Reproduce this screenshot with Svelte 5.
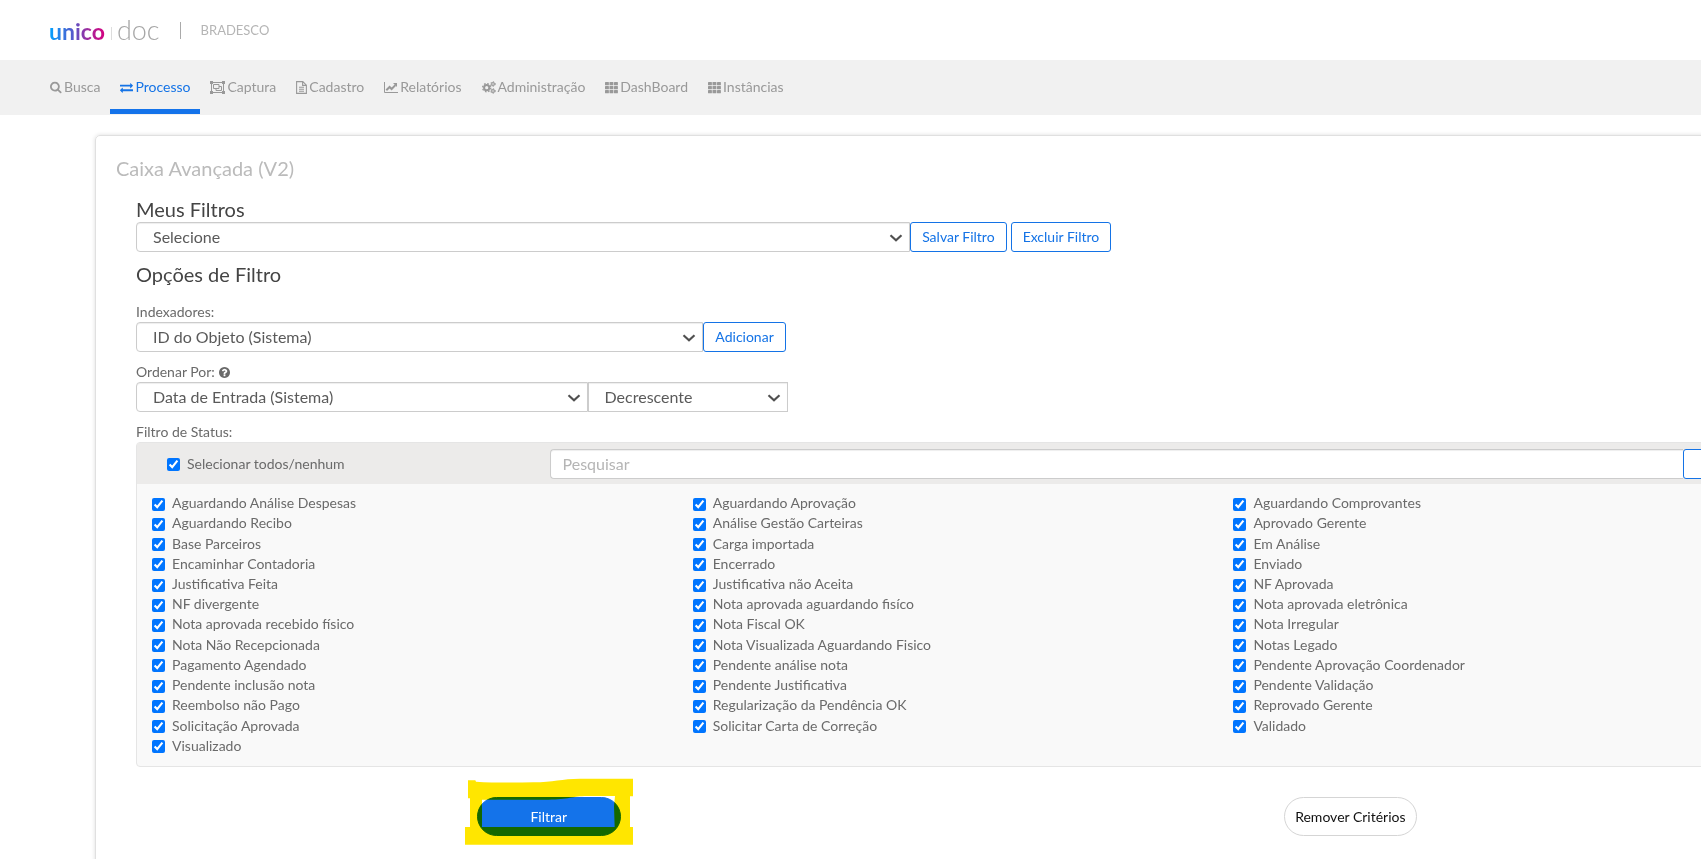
<script>
  const tabs = [
    { icon: 'search', label: 'Busca' },
    { icon: 'exchange', label: 'Processo', active: true },
    { icon: 'group', label: 'Captura' },
    { icon: 'file', label: 'Cadastro' },
    { icon: 'chart', label: 'Relatórios' },
    { icon: 'cogs', label: 'Administração' },
    { icon: 'grid', label: 'DashBoard' },
    { icon: 'grid', label: 'Instâncias' }
  ];

  const statuses = [
    'Aguardando Análise Despesas', 'Aguardando Aprovação', 'Aguardando Comprovantes',
    'Aguardando Recibo', 'Análise Gestão Carteiras', 'Aprovado Gerente',
    'Base Parceiros', 'Carga importada', 'Em Análise',
    'Encaminhar Contadoria', 'Encerrado', 'Enviado',
    'Justificativa Feita', 'Justificativa não Aceita', 'NF Aprovada',
    'NF divergente', 'Nota aprovada aguardando fisíco', 'Nota aprovada eletrônica',
    'Nota aprovada recebido físico', 'Nota Fiscal OK', 'Nota Irregular',
    'Nota Não Recepcionada', 'Nota Visualizada Aguardando Fisico', 'Notas Legado',
    'Pagamento Agendado', 'Pendente análise nota', 'Pendente Aprovação Coordenador',
    'Pendente inclusão nota', 'Pendente Justificativa', 'Pendente Validação',
    'Reembolso não Pago', 'Regularização da Pendência OK', 'Reprovado Gerente',
    'Solicitação Aprovada', 'Solicitar Carta de Correção', 'Validado',
    'Visualizado'
  ];

  let checked = $state(statuses.map(() => true));
  let all = $derived(checked.every(Boolean));

  function toggleAll(event) {
    const value = event.currentTarget.checked;
    checked = statuses.map(() => value);
  }
</script>

{#snippet icon(name)}
  {#if name === 'search'}
    <svg class="icon" width="12" height="13" viewBox="64 64 1728 1792"><path d="M1216 832q0-185-131.5-316.5T768 384 451.5 515.5 320 832t131.5 316.5T768 1280t316.5-131.5T1216 832zm512 832q0 52-38 90t-90 38q-54 0-90-38l-343-342q-179 124-399 124-143 0-273.5-55.5t-225-150-150-225T64 832t55.5-273.5 150-225 225-150T768 128t273.5 55.5 225 150 150 225T1472 832q0 220-124 399l343 343q37 37 37 90z" /></svg>
  {:else if name === 'exchange'}
    <svg class="icon" width="13" height="13" viewBox="0 0 1792 1792"><path d="M1792 1184v192q0 13-9.500 22.500t-22.500 9.500h-1376v192q0 13-9.500 22.500t-22.500 9.500q-12 0-24-10l-319-320q-9-9-9-22 0-14 9-23l320-320q9-9 23-9 13 0 22.500 9.500t9.500 22.500v192h1376q13 0 22.500 9.500t9.500 22.500zm0-544q0 14-9 23l-320 320q-9 9-23 9-13 0-22.500-9.500t-9.500-22.500v-192h-1376q-13 0-22.500-9.500t-9.500-22.500v-192q0-13 9.500-22.500t22.500-9.500h1376v-192q0-14 9-23t23-9q12 0 24 10l319 319q9 9 9 23z" /></svg>
  {:else if name === 'group'}
    <svg class="icon" width="15" height="13" viewBox="0 0 15 13">
      <path d="M0 0h3v1h9V0h3v3h-1v7h1v3h-3v-1H3v1H0v-3h1V3H0zM2 3v7h1v1h9v-1h1V3h-1V2H3v1z" fill-rule="evenodd" />
      <path d="M3.500 3.500h5.500v4H3.500z M9 5.500h2.500v4H6v-2" fill="none" stroke="currentColor" />
    </svg>
  {:else if name === 'file'}
    <svg class="icon" width="11" height="13" viewBox="0 0 11 13">
      <path d="M.6.6h6.200l3.600 3.600v8.200H.6zM6.600.6v3.800h3.800M3 6.300h5M3 8.300h5M3 10.300h5" fill="none" stroke="currentColor" stroke-width="1.100" />
    </svg>
  {:else if name === 'chart'}
    <svg class="icon" width="14" height="13" viewBox="0 0 14 13">
      <path d="M.5 1v10.500H14" fill="none" stroke="currentColor" />
      <path d="M2.300 9.300l3.300-3.300 2 2 3.800-3.900" fill="none" stroke="currentColor" stroke-width="2" />
      <path d="M9 2h4v4z" />
    </svg>
  {:else if name === 'cogs'}
    <svg class="icon" width="14" height="13" viewBox="0 0 14 13">
      <g fill="none" stroke="currentColor">
        <circle cx="4.700" cy="6.700" r="2.600" stroke-width="2" />
        <circle cx="4.700" cy="6.700" r="4.100" stroke-width="1.300" stroke-dasharray="1.620 1.600" />
        <circle cx="11" cy="3" r="1.400" stroke-width="1.200" />
        <circle cx="11" cy="3" r="2.300" stroke-width="1" stroke-dasharray="1.200 1.209" />
        <circle cx="11" cy="10" r="1.400" stroke-width="1.200" />
        <circle cx="11" cy="10" r="2.300" stroke-width="1" stroke-dasharray="1.200 1.209" />
      </g>
    </svg>
  {:else if name === 'grid'}
    <svg class="icon" width="13" height="13" viewBox="0 0 13 13">
      {#each [1, 5, 9] as y}
        {#each [0, 4.5, 9] as x}
          <rect {x} {y} width="3.900" height="3.300" rx=".6" />
        {/each}
      {/each}
    </svg>
  {:else if name === 'help'}
    <svg class="icon" width="11" height="11" viewBox="128 128 1536 1536"><path d="M1024 1376v-192q0-14-9-23t-23-9h-192q-14 0-23 9t-9 23v192q0 14 9 23t23 9h192q14 0 23-9t9-23zm256-672q0-88-55.500-163t-138.500-116-170-41q-243 0-371 213-15 24 8 42l132 100q7 6 19 6 16 0 25-12 53-68 86-92 34-24 86-24 48 0 85.500 26t37.500 59q0 38-20 61t-68 45q-63 28-115.500 86.500t-52.500 125.500v36q0 14 9 23t23 9h192q14 0 23-9t9-23q0-19 21.500-49.500t54.500-49.500q32-18 49-28.500t46-35 44.500-48 28-60.500 12.500-81zm384 192q0 209-103 385.500t-279.500 279.500-385.500 103-385.500-103-279.500-279.500-103-385.500 103-385.500 279.500-279.500 385.500-103 385.500 103 279.500 279.500 103 385.500z" /></svg>
  {/if}
{/snippet}

{#snippet chevron()}
  <svg class="chevron" width="14" height="8" viewBox="0 0 14 8"><path d="M1.500 1.300L7 6.200l5.500-4.900" fill="none" stroke="#505050" stroke-width="2.200" /></svg>
{/snippet}

<div class="page">
  <header>
    <a class="logo" href="#inicio"><span class="unico">unico</span><span class="thin"></span><span class="doc">doc</span></a>
    <span class="rule"></span>
    <span class="client">BRADESCO</span>
  </header>

  <nav>
    {#each tabs as tab}
      <a href="#{tab.label}" class:active={tab.active}>{@render icon(tab.icon)}<span>{tab.label}</span></a>
    {/each}
  </nav>

  <main>
    <section class="card">
      <h1>Caixa Avançada (V2)</h1>
      <form onsubmit={(e) => e.preventDefault()}>
        <h2><label for="saved">Meus Filtros</label></h2>
        <div class="line">
          <div class="select saved"><select id="saved"><option>Selecione</option></select>{@render chevron()}</div>
          <button class="outline">Salvar Filtro</button>
          <button class="outline spaced">Excluir Filtro</button>
        </div>

        <h2 class="options">Opções de Filtro</h2>

        <label class="caption" for="index">Indexadores:</label>
        <div class="line">
          <div class="select index"><select id="index"><option>ID do Objeto (Sistema)</option></select>{@render chevron()}</div>
          <button class="outline">Adicionar</button>
        </div>

        <label class="caption" for="order">Ordenar Por: {@render icon('help')}</label>
        <div class="line">
          <div class="select order"><select id="order"><option>Data de Entrada (Sistema)</option></select>{@render chevron()}</div>
          <div class="select direction"><select aria-label="Direção"><option>Decrescente</option><option>Crescente</option></select>{@render chevron()}</div>
        </div>

        <div class="caption">Filtro de Status:</div>
        <div class="panel">
          <div class="panel-head">
            <label class="check"><input type="checkbox" checked={all} onchange={toggleAll} /><span>Selecionar todos/nenhum</span></label>
            <div class="search">
              <input type="text" placeholder="Pesquisar" aria-label="Pesquisar" />
              <button class="outline" aria-label="Buscar">{@render icon('search')}</button>
            </div>
          </div>
          <div class="statuses">
            {#each statuses as status, i}
              <label class="check"><input type="checkbox" bind:checked={checked[i]} /><span>{status}</span></label>
            {/each}
          </div>
        </div>

        <div class="actions">
          <div class="marked">
            <button class="pill primary">Filtrar</button>
            <svg class="marker" width="168" height="67" viewBox="0 0 504 201" aria-hidden="true">
              <path fill-rule="evenodd" d="M9 7H31L33 11Q100 15 205 13C265 13 290 2 345 2H504V55H495V147H504V200H0V147H15V61H9ZM51 65H250C310 65 325 54 365 54H450L447 85L449 147H51Z" />
            </svg>
          </div>
          <div><button class="pill" type="reset">Remover Critérios</button></div>
        </div>
      </form>
    </section>
  </main>
</div>

<style>
  :global(body) {
    margin: 0;
    background: #fff;
  }

  .page {
    overflow: hidden;
    min-height: 100vh;
    font-family: Lato, "Open Sans", sans-serif;
    font-size: 14px;
    line-height: 20px;
    color: #6a6a6a;
  }

  *, *::before, *::after { box-sizing: border-box; }

  button, input, select { font: inherit; color: inherit; margin: 0; }

  a { text-decoration: none; color: inherit; }

  header {
    display: flex;
    align-items: center;
    height: 60px;
    padding-left: 49px;
  }

  .logo {
    display: flex;
    align-items: baseline;
    line-height: 32px;
  }

  .unico {
    font-size: 23px;
    font-weight: 700;
    color: transparent;
    background: linear-gradient(90deg, #00a3ff, #5a55c8 45%, #a02a9c 70%, #d6007f);
    background-clip: text;
  }

  .thin {
    width: 1px;
    height: 13px;
    margin: 0 5px 0 6px;
    background: #ddd;
  }

  .doc {
    font-size: 27px;
    font-weight: 300;
    color: #a6a6a6;
  }

  .rule {
    width: 1px;
    height: 17px;
    margin: 0 20px;
    background: #aaa;
  }

  .client {
    font-size: 13px;
    color: #b5b5b5;
  }

  nav {
    display: flex;
    height: 55px;
    padding-left: 40px;
    background: #f1f1f1;
    color: #999;
  }

  nav a {
    display: flex;
    align-items: center;
    gap: 2px;
    height: 54px;
    padding: 0 10px;
    border-top: 5px solid transparent;
    border-bottom: 5px solid transparent;
    white-space: nowrap;
  }

  nav a.active {
    color: #1473e6;
    border-bottom-color: #1473ea;
  }

  .icon { flex: none; fill: currentColor; }

  main {
    width: 113%;
    padding: 20px 91px 0 95px;
  }

  .card {
    padding: 20px 40px 60px 20px;
    border: 1px solid #e0e0e0;
    border-radius: 5px;
    box-shadow: 0 0 4px #ddd;
  }

  h1, h2 {
    margin: 0;
    font-size: 20px;
    font-weight: 400;
    line-height: 24px;
  }

  h1 { color: #bbb; }

  h2 {
    padding-bottom: 1px;
    color: #444;
  }

  form { padding: 17px 0 0 20px; }

  .line { display: flex; }

  .options { margin: 10px 0 15px; }

  .caption {
    display: flex;
    align-items: center;
    gap: 4px;
    height: 20px;
  }

  .line + .caption { margin-top: 10px; }

  .select { position: relative; }

  .saved { width: 46.8%; }

  .index { width: 34.3%; }

  .order { width: 27.3%; }

  .direction { width: 12.1%; }

  select {
    display: block;
    width: 100%;
    height: 30px;
    padding: 0 16px;
    appearance: none;
    font-size: 16px;
    color: #5a5a5a;
    background: #fff;
    border: 1px solid #ccc;
    border-radius: 4px 0 0 4px;
    box-shadow: inset 0 1px 1px #eee;
  }

  .direction select { border-radius: 0; }

  .chevron {
    position: absolute;
    top: 12px;
    right: 7px;
    pointer-events: none;
  }

  .outline {
    height: 30px;
    padding: 0 11px;
    color: #1473e6;
    background: #fff;
    border: 1px solid #1473e6;
    border-radius: 3px;
    white-space: nowrap;
  }

  .spaced { margin-left: 4px; }

  .panel {
    border: 1px solid #e5e5e5;
    border-radius: 4px;
    background: #f9f9f9;
  }

  .panel-head {
    display: grid;
    grid-template-columns: 1fr 3fr;
    align-items: center;
    height: 41px;
    padding-left: 30px;
    background: #ecebea;
  }

  .check {
    display: flex;
    align-items: center;
    gap: 7px;
  }

  .check input {
    width: 13px;
    height: 13px;
    margin-top: 2px;
    accent-color: #0075ff;
  }

  .search { display: flex; margin-left: -23px; }

  .search input {
    flex: 1;
    height: 30px;
    padding: 0 12px;
    font-size: 16px;
    background: #fff;
    border: 1px solid #ccc;
    border-right: 0;
    border-radius: 4px 0 0 4px;
    box-shadow: inset 0 1px 1px #eee;
  }

  .search input::placeholder { color: #b5b5b5; }

  .search .outline { width: 90px; margin-right: 16px; }

  .statuses {
    display: grid;
    grid-template-columns: repeat(3, 1fr);
    min-height: 282px;
    padding: 9px 15px 10px;
  }

  .actions {
    display: grid;
    grid-template-columns: 1fr 1fr;
    justify-items: center;
    margin: 30px 39px 0 12px;
  }

  .marked { position: relative; }

  .pill {
    display: block;
    height: 39px;
    padding: 0 10px;
    color: #111;
    background: #fff;
    border: 1px solid #d5d5d5;
    border-radius: 20px;
  }

  .primary {
    width: 144px;
    color: #fff;
    background: #1473ea;
    border-color: #1473ea;
  }

  .marker {
    position: absolute;
    left: -12px;
    top: -19px;
    fill: #ffe600;
    mix-blend-mode: multiply;
    pointer-events: none;
  }
</style>
